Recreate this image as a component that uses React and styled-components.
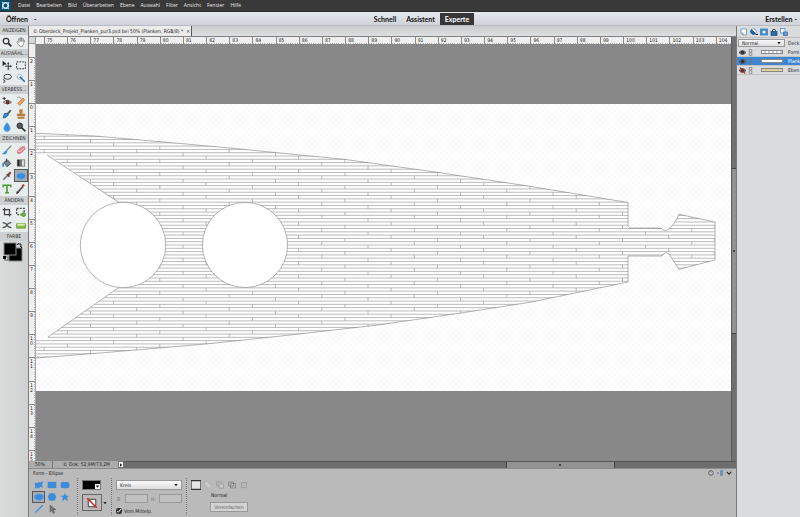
import React, { useState } from 'react';
import styled, { createGlobalStyle, css } from 'styled-components'


const GlobalStyle = createGlobalStyle`
    * { box-sizing: border-box; }
    body {
        margin: 0;
        overflow: hidden;
        font-family: "DejaVu Sans Condensed", "DejaVu Sans", sans-serif;
        font-size: 5px;
        line-height: 8px;
        color: #1c1c1c;
    }
    button, input, select {
        font: inherit;
        color: inherit;
        margin: 0;
        padding: 0;
        border: 0;
        background: none;
        border-radius: 0;
        cursor: pointer;
    }
    svg { display: block; flex: none; }
    `

const Wrapper = styled.div`
    height: 100vh;
    display: flex;
    flex-direction: column;
    background: #d3d5d5;
    `

// ---- top bars

const MenuBar = styled.nav`
    height: 12px;
    flex: none;
    display: flex;
    align-items: center;
    gap: 6px;
    padding-bottom: 2px;
    background: #393939;
    border-bottom: 1px solid #2c2c2c;
    color: #e8e8e8;
    font-family: "Open Sans", sans-serif;
    `

const Logo = styled.div`
    width: 11px;
    height: 11px;
    margin: 1px 1px 0 0;
    background: #0d4a6b;
    `

const MenuItem = styled.button`
    white-space: nowrap;
    `

const ModeBar = styled.header`
    height: 14px;
    flex: none;
    display: grid;
    grid-template-columns: 1fr auto 1fr;
    align-items: center;
    padding: 0 3px 0 6px;
    background: linear-gradient(180deg, #e6e9ee 0%, #cfd2d8 100%);
    border-bottom: 1px solid #b9bbbf;
    font-family: Lato, sans-serif;
    font-weight: bold;
    font-size: 7px;
    color: #111;
    `

const DropButton = styled.button`
    display: flex;
    align-items: center;
    gap: ${({ gap }) => gap}px;
    justify-self: ${({ end }) => end ? 'end' : 'start'};
    `

const Modes = styled.div`
    display: flex;
    margin-left: 40px;
    `

const Mode = styled.button`
    height: 12px;
    padding: 0 5px;
    ${({ active }) => active && css`
        color: white;
        background: #363636;
    `}
    `

const Main = styled.div`
    flex: 1;
    min-height: 0;
    display: flex;
    `

// ---- tool column

const Tools = styled.aside`
    width: 28px;
    flex: none;
    background: linear-gradient(90deg, #d9dcdb 0%, #cfd2d1 100%);
    `

const ToolGroup = styled.section`
    padding-bottom: 1px;
    background: #e7ecec;
    `

const ToolHeading = styled.h2`
    margin: 0;
    height: 9px;
    line-height: 9px;
    font-size: 5px;
    font-weight: normal;
    text-align: center;
    white-space: nowrap;
    overflow: hidden;
    color: #333;
    background: #cdd0d1;
    `

const ToolGrid = styled.div`
    display: grid;
    grid-template-columns: 1fr 1fr;
    grid-auto-rows: 13px;
    `

const Tool = styled.button`
    display: flex;
    align-items: center;
    justify-content: center;
    ${({ active }) => active && css`
        background: #a9adb0;
        border: 1px solid #55585a;
    `}
    `

const ColorPicker = styled.div`
    padding: 1px 0 0 3px;
    `

// ---- document window

const Center = styled.div`
    flex: 1;
    min-width: 0;
    display: flex;
    flex-direction: column;
    border-left: 1px solid #77797a;
    border-right: 1px solid #77797a;
    `

const TabBar = styled.div`
    height: 11px;
    flex: none;
    display: flex;
    background: linear-gradient(180deg, #c9cacc 0%, #dedfe0 100%);
    border-bottom: 1px solid #808080;
    `

const Tab = styled.div`
    display: flex;
    align-items: center;
    gap: 3px;
    padding: 0 1px 0 4px;
    background: #ebebeb;
    border-right: 1px solid #555;
    white-space: nowrap;
    `

const DocumentArea = styled.div`
    flex: 1;
    min-height: 0;
    display: grid;
    grid-template-columns: 7px 1fr 5px;
    grid-template-rows: 7px 1fr;
    `

const Corner = styled.div`
    background: #d6d6d6;
    border-right: 1px solid #999;
    border-bottom: 1px solid #999;
    `

const rulerTicks = (angle) => `repeating-linear-gradient(${angle}, #b5b5b5 0 1px, transparent 1px 10%)`

const TopRuler = styled.div`
    overflow: hidden;
    background: #efefef;
    padding-left: 8px;
    line-height: 7px;
    `

const TopScale = styled.div`
    height: 7px;
    display: grid;
    grid-template-columns: repeat(30, 1fr);
    margin-right: -8px;
    `

const TopMark = styled.span`
    padding-left: 2px;
    border-left: 1px solid #8a8a8a;
    background: ${rulerTicks('90deg')} 0 100% / 100% 1px no-repeat;
    `

const LeftRuler = styled.div`
    overflow: hidden;
    background: #efefef;
    border-right: 1px solid #a5a5a5;
    `

const LeftScale = styled.div`
    height: calc(100% + 12px);
    padding-top: 13px;
    display: grid;
    grid-template-rows: repeat(18, 1fr);
    line-height: 5px;
    `

const LeftMark = styled.span`
    width: 6px;
    padding: 1px 3px 0 1px;
    border-top: 1px solid #8a8a8a;
    background: ${rulerTicks('180deg')} 100% 0 / 1px 100% no-repeat;
    word-break: break-all;
    min-height: 0;
    `

const Canvas = styled.div`
    overflow: hidden;
    padding-top: 60px;
    background: #888888;
    svg { width: 100%; height: 287px; background: white; }
    `

const VScroll = styled.div`
    grid-row: 1 / 3;
    grid-column: 3;
    display: grid;
    grid-template-rows: 31fr 39fr 30fr;
    background: #707070;
    border-left: 1px solid #5c5c5c;
    `

const VThumb = styled.div`
    grid-row: 2;
    display: flex;
    align-items: center;
    justify-content: center;
    background: #929292;
    border-top: 1px solid #444;
    border-bottom: 1px solid #444;
    `

const Grip = styled.i`
    width: 2px;
    height: 2px;
    background: #444;
    `

const StatusBar = styled.div`
    height: 7px;
    flex: none;
    display: flex;
    line-height: 7px;
    background: #acacac;
    white-space: nowrap;
    `

const Zoom = styled.div`
    width: 24px;
    padding-left: 6px;
    border-right: 1px solid #777;
    `

const DocSize = styled.div`
    width: 65px;
    padding-left: 10px;
    `

const StatusArrow = styled.button`
    width: 6px;
    display: flex;
    align-items: center;
    justify-content: center;
    background: #f1f1f1;
    border: 1px solid #777;
    `

const HScroll = styled.div`
    flex: 1;
    display: grid;
    grid-template-columns: 63fr 18fr 20fr;
    background: #6d6d6d;
    border-top: 1px solid #555;
    `

const HThumb = styled(VThumb)`
    grid-row: 1;
    grid-column: 2;
    border: 0;
    border-left: 1px solid #444;
    border-right: 1px solid #444;
    `

// ---- tool options

const Options = styled.section`
    height: 49px;
    flex: none;
    display: flex;
    align-items: stretch;
    padding: 1px 4px 2px 3px;
    background: #bababa;
    border-top: 1px solid #8b8b8b;
    `

const ShapeColumn = styled.div`
    width: 45px;
    `

const OptionsTitle = styled.div`
    padding-left: 1px;
    height: 9px;
    line-height: 6px;
    `

const ShapeGrid = styled.div`
    display: grid;
    grid-template-columns: repeat(3, 13px);
    grid-auto-rows: 12px;
    `

const OptionColumn = styled.div`
    width: ${({ width }) => width}px;
    display: flex;
    flex-direction: column;
    gap: 4px;
    margin-top: 8px;
    padding: 2px 4px 0;
    border-left: 1px dotted #777;
    `

const FillSwatch = styled.button`
    width: 19px;
    height: 10px;
    display: flex;
    align-items: flex-end;
    justify-content: flex-end;
    background: black;
    border: 1px solid #777;
    `

const StyleRow = styled.div`
    display: flex;
    align-items: center;
    gap: 1px;
    `

const StyleBox = styled.button`
    width: 21px;
    height: 17px;
    display: flex;
    align-items: center;
    justify-content: center;
    border: 1px solid #666;
    `

const SelectBox = styled.span`
    display: flex;
    align-items: center;
    height: ${({ height }) => height}px;
    padding-right: 3px;
    background: linear-gradient(180deg, #fafafa 0%, #dcdcdc 100%);
    border: 1px solid #999;
    select {
        flex: 1;
        min-width: 0;
        height: 100%;
        padding-left: 3px;
        line-height: 6px;
        appearance: none;
        outline: none;
    }
    `

const SizeRow = styled.div`
    display: flex;
    justify-content: space-between;
    padding-left: 1px;
    color: #777;
    `

const SizeLabel = styled.label`
    display: flex;
    align-items: center;
    gap: 3px;
    input {
        width: 23px;
        height: 9px;
        border: 1px solid #999;
        background: #c1c1c1;
    }
    `

const CheckLabel = styled.label`
    display: flex;
    align-items: center;
    gap: 2px;
    white-space: nowrap;
    input {
        width: 6px;
        height: 6px;
        accent-color: #333;
    }
    `

const ModeRow = styled.div`
    display: flex;
    gap: 2px;
    `

const PathMode = styled.button`
    width: 10px;
    height: 10px;
    display: flex;
    align-items: center;
    justify-content: center;
    opacity: ${({ active }) => active ? 1 : 0.5};
    `

const Simplify = styled.div`
    display: flex;
    flex-direction: column;
    align-items: flex-start;
    gap: 4px;
    margin-top: -2px;
    padding-left: 19px;
    line-height: 6px;
    span { padding-left: 1px; }
    `

const SimplifyButton = styled.button`
    width: 38px;
    height: 10px;
    border: 1px solid #999;
    background: #d3d3d3;
    color: #606060;
    `

const PanelControls = styled.div`
    display: flex;
    gap: 3px;
    margin-left: auto;
    align-self: flex-start;
    `

const PanelButton = styled.button`
    width: 6px;
    height: 6px;
    `

// ---- layers

const Layers = styled.aside`
    width: 63px;
    flex: none;
    overflow: hidden;
    background: #d9dbdd;
    white-space: nowrap;
    `

const LayerTools = styled.div`
    height: 12px;
    display: flex;
    align-items: center;
    gap: 2px;
    padding-left: 3px;
    border-bottom: 1px solid #bbb;
    `

const LayerTool = styled.button`
    width: 8px;
    height: 8px;
    flex: none;
    `

const BlendRow = styled.div`
    height: 10px;
    display: flex;
    align-items: center;
    gap: 3px;
    padding-left: 1px;
    ${SelectBox} { width: 47px; flex: none; }
    `

const LayerList = styled.ul`
    list-style: none;
    margin: 0;
    padding: 0;
    `

const LayerRow = styled.li`
    height: 9px;
    display: flex;
    align-items: center;
    gap: 1px;
    padding-left: 2px;
    border-bottom: 1px solid #c3c5c7;
    ${({ active }) => active && css`
        color: white;
        background: #3f86d0;
    `}
    `

const Eye = styled.button`
    width: 7px;
    height: 7px;
    flex: none;
    `

const Thumb = styled.span`
    width: 22px;
    height: 4px;
    flex: none;
    margin: 0 4px 0 6px;
    border: 1px solid #888;
    background: ${({ fill }) => fill};
    `

const Svg = ({ size = 10, children }) => (
    <svg width={size} height={size} viewBox="0 0 16 16" fill="none" stroke="#333" strokeWidth="1.5">
        {children}
    </svg>
)

const BLUE = '#3d8cdb'

const toolIcons = {
    zoom: <><circle cx="6.500" cy="6.500" r="4.500" strokeWidth="2" /><path d="M10 10l5 5" strokeWidth="3" /></>,
    hand: <path d="M5 14L1 8l1-1 3 2-1-6 1-1 2 5V1h2v6l1-5 2 1-1 5 2-3 1 1-3 7-1 3z" fill="#fff" stroke="#666" strokeWidth="1" />,
    move: <><path d="M1 1v9l3-3h4z" fill="#222" stroke="none" /><path d="M10 5v10M5 10h10" /><path d="M10 3l2 3H8zM10 16l2-2H8zM16 10l-3-2v4z" fill="#333" stroke="none" /></>,
    marquee: <rect x="1" y="3" width="14" height="11" strokeDasharray="3 1.500" strokeWidth="1.500" />,
    lasso: <><ellipse cx="9" cy="6" rx="6" ry="4" /><path d="M4 9c-3 1-2 3 0 3s1 3-2 3" /></>,
    wand: <><circle cx="6" cy="6" r="4" fill="#dff0ff" stroke="#7b9cb5" strokeDasharray="2 1" /><path d="M6 6l8 8" stroke="#3f6f94" strokeWidth="2.500" /></>,
    redeye: <><path d="M2 10q6-6 13 0-6 5-13 0z" fill="#fff" stroke="#555" /><circle cx="9" cy="10" r="2.500" fill="#a22" stroke="#422" /><path d="M1 4h5M3.500 1.500v5" /></>,
    heal: <><path d="M3 12L11 3l3 3-8 9z" fill="#eba25c" stroke="#d08245" /><path d="M2 3q5-3 6 2" stroke="#999" /></>,
    smart: <><path d="M8 9l6-7" stroke="#555" strokeWidth="3" /><path d="M2 14L4 7l5 0 1 3-5 4z" fill={BLUE} stroke="#225f9c" /></>,
    stamp: <path d="M6 1h4v4l-1 3h5v3H2V8h5L6 5zM3 13h10v2H3z" fill="#c8843c" stroke="#a87038" strokeWidth="1" />,
    drop: <path d="M8 1q5 6 5 9a5 5 0 0 1-10 0q0-3 5-9z" fill={BLUE} stroke="#5ba3e6" />,
    sponge: <><circle cx="6" cy="6" r="4.500" fill="#555" /><path d="M9 9l6 6" strokeWidth="2.500" /></>,
    brush: <><path d="M7 9l8-8" stroke="#777" strokeWidth="2" /><path d="M1 14q3 0 3-3l3-2 1 2q-2 5-7 3z" fill={BLUE} stroke={BLUE} /></>,
    eraser: <><path d="M2 10L9 3l5 0v4l-7 6H3z" fill="#e58a94" stroke="#c9606d" /><path d="M3 10h5l6-6" stroke="#fff" strokeWidth="1" /></>,
    bucket: <><path d="M3 7l6-4 5 6-6 5z" fill="#77848c" stroke="#555" /><path d="M2 8v6" stroke={BLUE} strokeWidth="3" /><path d="M7 6V1" /></>,
    gradient: <><rect x="2" y="3" width="4" height="10" fill="#222" stroke="none" /><rect x="6" y="3" width="4" height="10" fill="#777" stroke="none" /><rect x="10" y="3" width="4" height="10" fill="#ddd" stroke="none" /><rect x="2" y="3" width="12" height="10" stroke="#555" strokeWidth="1" /></>,
    dropper: <><path d="M2 14l7-7" stroke="#777" strokeWidth="2.500" /><path d="M8 5l4 4M10 6l4-4" stroke="#7a3a3a" strokeWidth="3" /></>,
    ellipse: <ellipse cx="8" cy="8" rx="7" ry="5" fill={BLUE} stroke="#66abed" />,
    type: <path d="M2 5V2h12v3M8 2v12M5 14h6" stroke="#4b9b31" strokeWidth="2.500" />,
    pencil: <><path d="M3 13l8-9" stroke="#555" strokeWidth="3" /><path d="M10 4l3-3" stroke="#b33" strokeWidth="3" /><path d="M1 15l3-1-2-2z" fill="#222" /></>,
    crop: <path d="M4 1v11h11M1 4h11v11" strokeWidth="2" stroke="#444" />,
    recompose: <><rect x="1" y="2" width="12" height="10" strokeDasharray="3 2" strokeWidth="2" stroke="#444" /><circle cx="12" cy="12" r="3" fill="#6bb83c" stroke="#4a8d26" /></>,
    content: <path d="M1 4q5 0 7 4t7 4M1 12q5 0 7-4t7-4" strokeWidth="2" stroke="#555" />,
    straighten: <><path d="M1 6h14v7H1z" fill="#86bc46" stroke="#6e9f3c" /><path d="M2 6h12v3H2z" fill="#e7e7b5" stroke="none" /></>,
}

const toolGroups = [
    ['ANZEIGEN', ['zoom', 'hand']],
    ['AUSWÄHL...', ['move', 'marquee', 'lasso', 'wand']],
    ['VERBESS...', ['redeye', 'heal', 'smart', 'stamp', 'drop', 'sponge']],
    ['ZEICHNEN', ['brush', 'eraser', 'bucket', 'gradient', 'dropper', 'ellipse', 'type', 'pencil']],
    ['ÄNDERN', ['crop', 'recompose', 'content', 'straighten']],
]

const shapeIcons = {
    custom: <path d="M1 4l4 1 3-2 2 1 5-2-2 5 1 5-4-1-3 3-2-2-4 2 1-5z" fill={BLUE} stroke="none" />,
    rectangle: <rect x="1" y="3" width="14" height="10" fill={BLUE} stroke="none" />,
    rounded: <rect x="1" y="3" width="14" height="10" rx="3" fill={BLUE} stroke="none" />,
    ellipse: <ellipse cx="8" cy="8" rx="7" ry="5" fill={BLUE} stroke="#58a1e8" />,
    polygon: <path d="M4 2h8l3 6-3 6H4L1 8z" fill={BLUE} stroke="none" />,
    star: <path d="M8 1l2 5h5l-4 3 2 6-5-4-5 4 2-6-4-3h5z" fill={BLUE} stroke="none" />,
    line: <path d="M2 14L14 2" stroke={BLUE} strokeWidth="2" />,
    select: <path d="M5 2v11l3-3 2 5 2-1-2-5h4z" fill="#777" stroke="#555" strokeWidth="1" />,
}

const pathModes = {
    neu: <path d="M0 1h16v14H0z" fill="#e4e4e4" stroke="#333" strokeWidth="2" />,
    addieren: <path d="M1 2h9v4h4v8H5v-4H1z" fill="#ddd" stroke="#aaa" />,
    subtrahieren: <><path d="M1 2h10v8H1z" stroke="#777" /><path d="M6 6h9v8H6z" fill="#ddd" stroke="#777" /></>,
    schnittmenge: <path d="M1 2h10v8H1zM5 5h10v9H5z" stroke="#444" />,
    ausschliessen: <><path d="M3 3h10v10H3z" stroke="#777" /><path d="M1 14L15 1M0 5h5M12 12v4" stroke="#999" /></>,
}

const layerIcons = {
    'Neue Ebene': <><path d="M2 2h11v12H6l-4-4z" fill="#fff" stroke="#5c88ad" /><path d="M2 10h4v4" stroke="#5c88ad" /></>,
    'Füllebene': <><circle cx="7" cy="7" r="5.500" fill="#fff" stroke={BLUE} /><path d="M3 3a5.500 5.500 0 0 0 8 8z" fill="#215f9c" stroke="#215f9c" /><path d="M11 13h5" stroke="#222" strokeWidth="2" /></>,
    'Maske': <><rect x="1" y="2" width="14" height="12" fill={BLUE} stroke="#3e81be" /><circle cx="8" cy="8" r="3" fill="#fff" stroke="none" /></>,
    'Sperren': <><rect x="2" y="7" width="12" height="8" fill="#2d6ca7" stroke="#24567f" /><path d="M5 7V4q3-4 6 0v3" stroke="#24567f" strokeWidth="2" /></>,
    'Transparenz sperren': <><rect x="1" y="1" width="9" height="9" fill="#fff" stroke={BLUE} /><rect x="7" y="8" width="8" height="7" fill="#6f9fc9" stroke="#2d6ca7" /></>,
}

const menus = ['Datei', 'Bearbeiten', 'Bild', 'Überarbeiten', 'Ebene', 'Auswahl', 'Filter', 'Ansicht', 'Fenster', 'Hilfe']
const modes = ['Schnell', 'Assistent', 'Experte']

const layers = [
    { name: 'Form', fill: 'repeating-linear-gradient(90deg, #fff 0 2px, #ccc 2px 4px)', visible: true },
    { name: 'Plank', fill: '#fff', visible: true },
    { name: 'Eben', fill: '#e0cf9a', visible: false },
]

const HULL = `M36 133.300L95 136L169 142.500L230 148L275 152.500L344 159.300L437 172.300L530 186.300L628 202.500
    V226L630 228H661Q664 232 668 229.500Q675 224 679 214.300L715 222V260L679 269.300L669 254Q665 251 662 256H628V282
    L530 302.300L461 313L378 325L275 336.700L206 344L100 353L36 358`
const INNER = 'L36 338H47L118 288.500V202L47 154H36Z'

// plank rows and the staggered joints between them
const ROW = 3.297
const COLUMN = 23.13
const OFFSETS = [0, 1, 3, 2]
const rows = Array.from({ length: 71 }, (_, i) => 152.7 + (i - 7) * ROW)
const joints = []
for (let col = 0; col < 30; col++) {
    const x = 44.2 + col * COLUMN
    for (let k = -3; k < 17; k++) {
        const y = 152.7 + (OFFSETS[(col + 2) % 4] + k * 4) * ROW
        joints.push(`M${x.toFixed(1)} ${y.toFixed(1)}v${ROW}`)
    }
}

function ShipDrawing() {
    return (
        <svg viewBox="36 104 695 287" preserveAspectRatio="xMinYMin meet" aria-label="Oberdeck">
            <defs>
                <pattern id="mesh" width="6" height="6" patternUnits="userSpaceOnUse">
                    <path d="M0 0l6 6M6 0l-6 6" stroke="#f3f3f3" strokeWidth="0.600" />
                </pattern>
                <clipPath id="hull"><path d={HULL + INNER} /></clipPath>
            </defs>
            <rect x="36" y="104" width="695" height="287" fill="url(#mesh)" />
            <path d={HULL + INNER} fill="#fff" />
            <g clipPath="url(#hull)" stroke="#8d8d8d" strokeWidth="0.600">
                <path d={rows.map(y => `M36 ${y.toFixed(2)}H716`).join('')} />
                <path d={joints.join('')} />
            </g>
            <g fill="none" stroke="#6a6a6a" strokeWidth="0.500">
                <path d={HULL} />
                <path d="M47 155L119 202.500M118 288L48 337" />
                <circle cx="123" cy="245" r="42.700" fill="#fff" />
                <circle cx="245" cy="245" r="42.600" fill="#fff" />
            </g>
        </svg>
    )
}

const Caret = ({ size = 4 }) => (
    <Svg size={size}><path d="M1 4h14l-7 9z" fill="#222" stroke="none" /></Svg>
)

export default function App() {
    const [mode, setMode] = useState('Experte')
    const [tool, setTool] = useState('ellipse')
    const [shape, setShape] = useState('ellipse')
    const [layer, setLayer] = useState('Plank')

    return (
        <Wrapper>
            <GlobalStyle />
            <MenuBar>
                <Logo>
                    <Svg size={11}>
                        <circle cx="8" cy="8" r="4" stroke="#d5efff" strokeWidth="2.500" />
                        <path d="M3 3l3 2M13 3l-2 3M13 13l-3-2M3 13l2-3" stroke="#8fd0f4" strokeWidth="2" />
                    </Svg>
                </Logo>
                {menus.map(name => <MenuItem key={name}>{name}</MenuItem>)}
            </MenuBar>

            <ModeBar>
                <DropButton gap={6}>Öffnen <span>-</span></DropButton>
                <Modes>
                    {modes.map(name =>
                        <Mode key={name} active={name === mode || undefined} onClick={() => setMode(name)}>{name}</Mode>
                    )}
                </Modes>
                <DropButton gap={2} end="true">Erstellen <span>-</span></DropButton>
            </ModeBar>

            <Main>
                <Tools>
                    {toolGroups.map(([title, names]) =>
                        <ToolGroup key={title}>
                            <ToolHeading>{title}</ToolHeading>
                            <ToolGrid>
                                {names.map(name =>
                                    <Tool key={name} aria-label={name} active={name === tool || undefined}
                                        onClick={() => setTool(name)}>
                                        <Svg>{toolIcons[name]}</Svg>
                                    </Tool>
                                )}
                            </ToolGrid>
                        </ToolGroup>
                    )}
                    <ToolHeading>FARBE</ToolHeading>
                    <ColorPicker>
                        <svg width="20" height="20" viewBox="0 0 20 20">
                            <rect x="6" y="6" width="13" height="13" fill="#000" stroke="#888" />
                            <rect x="1" y="1" width="12" height="12" fill="#000" stroke="#888" />
                            <path d="M15 2h3v3M14 3l2-2M17 4l2 2" fill="none" stroke="#222" />
                            <rect x="2" y="15" width="3" height="3" fill="#fff" stroke="#555" />
                            <rect x="0" y="14" width="3" height="3" fill="#000" />
                        </svg>
                    </ColorPicker>
                </Tools>

                <Center>
                    <TabBar>
                        <Tab>
                            <span>© Oberdeck_Projekt_Planken_pur3.psd bei 50% (Planken, RGB/8) *</span>
                            <button aria-label="Schließen">×</button>
                        </Tab>
                    </TabBar>
                    <DocumentArea>
                        <Corner />
                        <TopRuler>
                            <TopScale>
                                {Array.from({ length: 30 }, (_, i) => <TopMark key={i}>{75 + i}</TopMark>)}
                            </TopScale>
                        </TopRuler>
                        <VScroll><VThumb><Grip /></VThumb></VScroll>
                        <LeftRuler>
                            <LeftScale>
                                {Array.from({ length: 18 }, (_, i) => <LeftMark key={i}>{Math.abs(i - 2)}</LeftMark>)}
                            </LeftScale>
                        </LeftRuler>
                        <Canvas><ShipDrawing /></Canvas>
                    </DocumentArea>
                    <StatusBar>
                        <Zoom>50%</Zoom>
                        <DocSize>© Dok: 52,9M/73,2M</DocSize>
                        <StatusArrow aria-label="Info">
                            <Svg size={4}><path d="M4 1l9 7-9 7z" fill="#222" stroke="none" /></Svg>
                        </StatusArrow>
                        <HScroll><HThumb><Grip /></HThumb></HScroll>
                    </StatusBar>

                    <Options>
                        <ShapeColumn>
                            <OptionsTitle>Form - Ellipse</OptionsTitle>
                            <ShapeGrid>
                                {Object.keys(shapeIcons).map(name =>
                                    <Tool key={name} aria-label={name} active={name === shape || undefined}
                                        onClick={() => setShape(name)}>
                                        <Svg>{shapeIcons[name]}</Svg>
                                    </Tool>
                                )}
                            </ShapeGrid>
                        </ShapeColumn>
                        <OptionColumn width={34}>
                            <FillSwatch aria-label="Farbe">
                                <Svg size={5}><path d="M0 0h16v16H0z" fill="#fff" stroke="none" /><path d="M2 5h12l-6 7z" fill="#222" stroke="none" /></Svg>
                            </FillSwatch>
                            <StyleRow>
                                <StyleBox aria-label="Stil">
                                    <Svg size={10}>
                                        <path d="M2 2h12v12H2z" fill="#fff" stroke="#333" />
                                        <path d="M0 0l16 16" stroke="#d22" strokeWidth="2.500" />
                                    </Svg>
                                </StyleBox>
                                <Caret />
                            </StyleRow>
                        </OptionColumn>
                        <OptionColumn width={75}>
                            <SelectBox height={10}>
                                <select aria-label="Form" defaultValue="Kreis">
                                    <option>Kreis</option>
                                    <option>Ohne Einschränkungen</option>
                                </select>
                                <Caret />
                            </SelectBox>
                            <SizeRow>
                                <SizeLabel>B: <input disabled /></SizeLabel>
                                <SizeLabel>H: <input disabled /></SizeLabel>
                            </SizeRow>
                            <CheckLabel><input type="checkbox" defaultChecked /> Vom Mittelp.</CheckLabel>
                        </OptionColumn>
                        <OptionColumn width={70}>
                            <ModeRow>
                                {Object.keys(pathModes).map((name, i) =>
                                    <PathMode key={name} aria-label={name} active={i === 0 || undefined}>
                                        <Svg size={i === 0 ? 10 : 8}>{pathModes[name]}</Svg>
                                    </PathMode>
                                )}
                            </ModeRow>
                            <Simplify>
                                <span>Normal</span>
                                <SimplifyButton>Vereinfachen</SimplifyButton>
                            </Simplify>
                        </OptionColumn>
                        <PanelControls>
                            <PanelButton aria-label="Hilfe">
                                <Svg size={6}><circle cx="8" cy="8" r="6" fill="#ddd" strokeWidth="2" /><path d="M8 4v5M8 11v2" /></Svg>
                            </PanelButton>
                            <PanelButton aria-label="Menü">
                                <Svg size={6}><path d="M0 8h5M8 3h8M8 8h8M8 13h8" stroke="#3a6a92" strokeWidth="2.500" /></Svg>
                            </PanelButton>
                            <PanelButton aria-label="Ausblenden">
                                <Svg size={6}><path d="M2 5l6 6 6-6" strokeWidth="3" /></Svg>
                            </PanelButton>
                        </PanelControls>
                    </Options>
                </Center>

                <Layers>
                    <LayerTools>
                        {Object.keys(layerIcons).map(name =>
                            <LayerTool key={name} aria-label={name}><Svg size={8}>{layerIcons[name]}</Svg></LayerTool>
                        )}
                    </LayerTools>
                    <BlendRow>
                        <SelectBox height={8}>
                            <select aria-label="Füllmethode" defaultValue="Normal">
                                <option>Normal</option>
                                <option>Multiplizieren</option>
                            </select>
                            <Caret />
                        </SelectBox>
                        <span>Deck</span>
                    </BlendRow>
                    <LayerList>
                        {layers.map(({ name, fill, visible }) =>
                            <LayerRow key={name} active={name === layer || undefined} onClick={() => setLayer(name)}>
                                <Eye aria-label={`${name} einblenden`}>
                                    <Svg size={7}>
                                        <path d="M0 8q8-9 16 0-8 9-16 0z" fill="#777" />
                                        <circle cx="8" cy="8" r="3" fill="#222" />
                                        {!visible && <path d="M2 1l12 14" stroke="#c22" strokeWidth="2.500" />}
                                    </Svg>
                                </Eye>
                                <Svg size={7}><path d="M5 1h6v6H5zM5 9h6v6H5z" stroke="#777" /></Svg>
                                <Thumb fill={fill} />
                                <span>{name}</span>
                            </LayerRow>
                        )}
                    </LayerList>
                </Layers>
            </Main>
        </Wrapper>
    );
}
